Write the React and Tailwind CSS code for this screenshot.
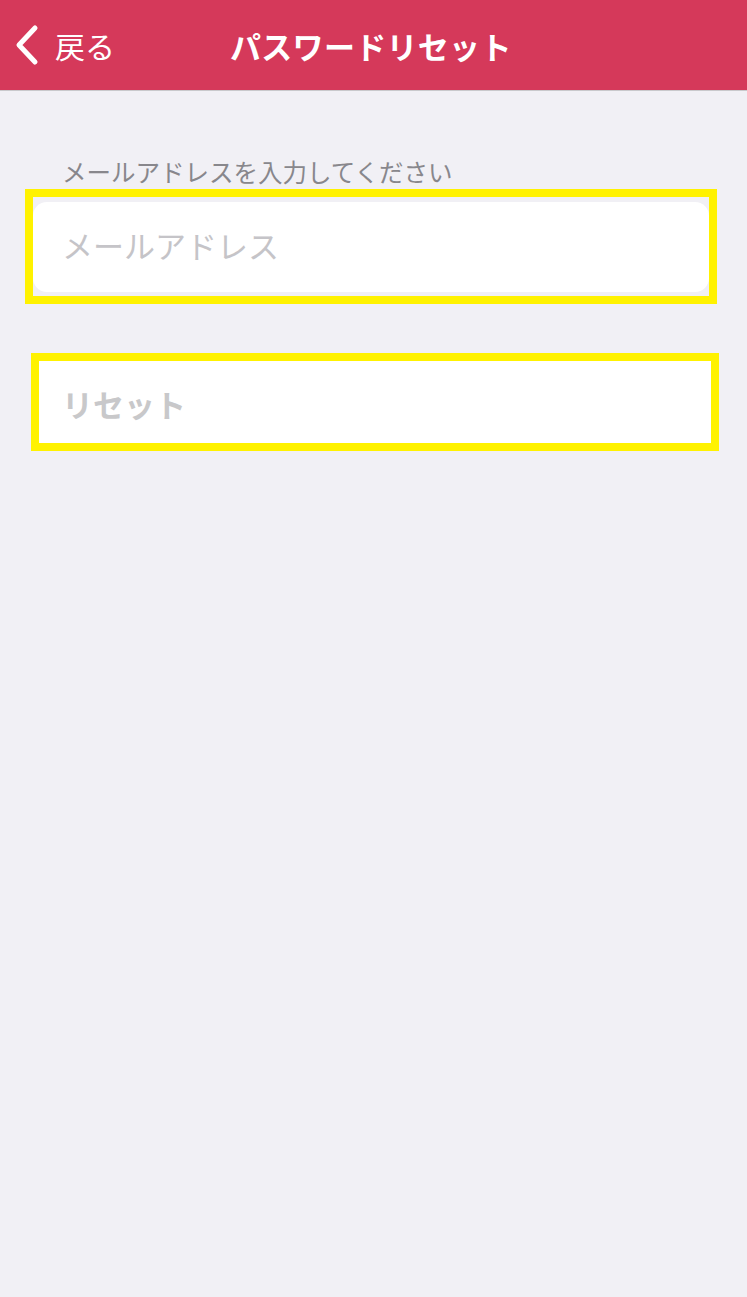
import React from "react";

const font = { fontFamily: '"Noto Sans CJK JP", "Noto Sans", sans-serif' };

export default function App() {
  return (
    <div className="min-h-[1297px] w-full bg-[#f1f0f5]" style={font}>
      <header className="relative flex h-[91px] items-center border-b border-[#c9c9cc] bg-[#d5395a] text-white">
        <div className="flex items-center pl-[13px]">
          <svg width="27" height="42" viewBox="0 0 27 42" className="mr-[15px]">
            <path d="M22 4 L6 21 L22 38" fill="none" stroke="white" strokeWidth="5" strokeLinecap="round" strokeLinejoin="round" />
          </svg>
          <span className="text-[30px] leading-none">戻る</span>
        </div>
        <h1 className="absolute left-[230px] text-[31px] font-bold leading-none tracking-[0.3px]">パスワードリセット</h1>
      </header>

      <div className="pt-[65px]">
        <div className="pl-[62px] text-[24.5px] leading-[31px] text-[#88878c]">メールアドレスを入力してください</div>
        <div className="ml-[25px] mt-[2px] w-[692px] border-[8px] border-[#fff200] pt-[5px] pb-[4px]">
          <div className="flex h-[90px] items-center rounded-[14px] bg-white pb-[4px] pl-[29px] text-[31px] text-[#c5c4c8]">
            メールアドレス
          </div>
        </div>
        <div className="ml-[31px] mt-[49px] w-[688px] border-[8px] border-[#fff200]">
          <div className="flex h-[82px] items-center bg-white pt-[5px] pl-[23px] text-[31px] font-bold text-[#c8c8ca]">
            リセット
          </div>
        </div>
      </div>
    </div>
  );
}
